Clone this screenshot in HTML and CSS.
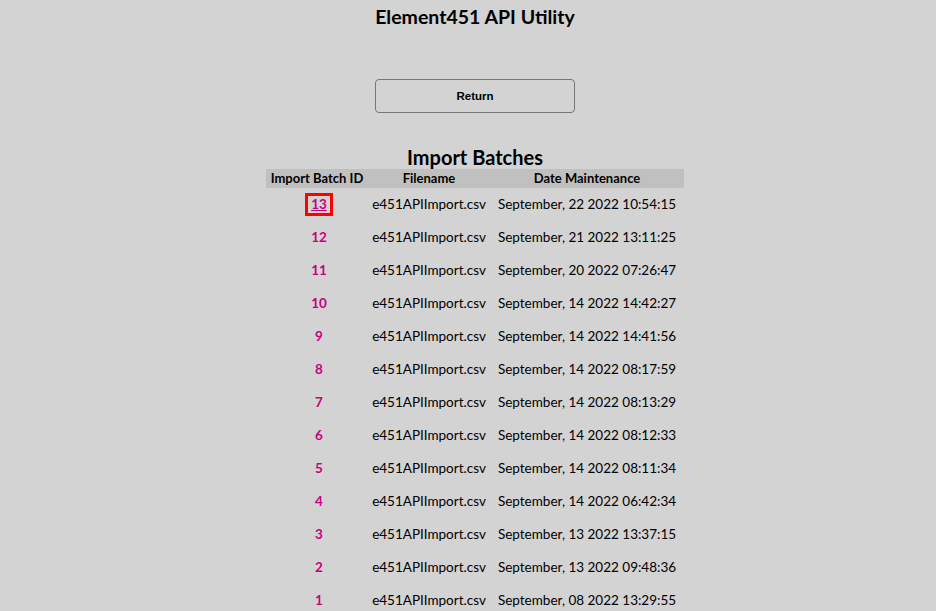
FILE: index.html
```html
<!DOCTYPE html>
<html>
<head>
<meta charset="utf-8">
<title>Element451 API Utility</title>
<link rel="stylesheet" href="styles.css">
</head>
<body>
<div class="page">
  <h1 class="title">Element451 API Utility</h1>
  <div class="actions">
    <button class="btn">Return</button>
  </div>
  <h2 class="caption">Import Batches</h2>
  <table class="batches">
    <thead>
      <tr><th class="c-id">Import Batch ID</th><th class="c-file">Filename</th><th class="c-date">Date Maintenance</th></tr>
    </thead>
    <tbody>
      <tr><td class="c-id"><a class="id-link focused" href="#">13</a></td><td>e451APIImport.csv</td><td>September, 22 2022 10:54:15</td></tr>
      <tr><td class="c-id"><a class="id-link" href="#">12</a></td><td>e451APIImport.csv</td><td>September, 21 2022 13:11:25</td></tr>
      <tr><td class="c-id"><a class="id-link" href="#">11</a></td><td>e451APIImport.csv</td><td>September, 20 2022 07:26:47</td></tr>
      <tr><td class="c-id"><a class="id-link" href="#">10</a></td><td>e451APIImport.csv</td><td>September, 14 2022 14:42:27</td></tr>
      <tr><td class="c-id"><a class="id-link" href="#">9</a></td><td>e451APIImport.csv</td><td>September, 14 2022 14:41:56</td></tr>
      <tr><td class="c-id"><a class="id-link" href="#">8</a></td><td>e451APIImport.csv</td><td>September, 14 2022 08:17:59</td></tr>
      <tr><td class="c-id"><a class="id-link" href="#">7</a></td><td>e451APIImport.csv</td><td>September, 14 2022 08:13:29</td></tr>
      <tr><td class="c-id"><a class="id-link" href="#">6</a></td><td>e451APIImport.csv</td><td>September, 14 2022 08:12:33</td></tr>
      <tr><td class="c-id"><a class="id-link" href="#">5</a></td><td>e451APIImport.csv</td><td>September, 14 2022 08:11:34</td></tr>
      <tr><td class="c-id"><a class="id-link" href="#">4</a></td><td>e451APIImport.csv</td><td>September, 14 2022 06:42:34</td></tr>
      <tr><td class="c-id"><a class="id-link" href="#">3</a></td><td>e451APIImport.csv</td><td>September, 13 2022 13:37:15</td></tr>
      <tr><td class="c-id"><a class="id-link" href="#">2</a></td><td>e451APIImport.csv</td><td>September, 13 2022 09:48:36</td></tr>
      <tr><td class="c-id"><a class="id-link" href="#">1</a></td><td>e451APIImport.csv</td><td>September, 08 2022 13:29:55</td></tr>
    </tbody>
  </table>
</div>
</body>
</html>
```
FILE: styles.css
```css
html, body {
  margin: 0;
  padding: 0;
  background: #d3d3d3;
}
body {
  font-family: Lato, "DejaVu Sans", sans-serif;
  color: #000;
  overflow: hidden;
}
.page {
  padding: 5px 0 0 14px;
  display: flex;
  flex-direction: column;
  align-items: center;
}
.title {
  margin: 0;
  font-size: 19.5px;
  line-height: 24px;
  font-weight: bold;
}
.actions {
  margin-top: 50px;
  line-height: 0;
}
.btn {
  width: 200px;
  height: 34px;
  border: 1px solid #767676;
  border-radius: 4px;
  background: #d3d3d3;
  font-family: "Liberation Sans", Arial, sans-serif;
  font-weight: bold;
  font-size: 11.5px;
  line-height: 14px;
  color: #000;
  padding: 0;
}
.caption {
  margin: 32px 0 0;
  font-size: 20px;
  line-height: 24px;
  font-weight: bold;
}
.batches {
  border-collapse: collapse;
  width: 418px;
  table-layout: fixed;
  font-size: 13.5px;
}
.batches thead tr {
  background: #c0c0c0;
}
.batches th {
  height: 19px;
  line-height: 19px;
  padding: 0;
  font-size: 13px;
  font-weight: bold;
  text-align: center;
  white-space: nowrap;
}
.c-id { width: 102px; }
.c-file { width: 122px; }
.c-date { width: 194px; }
.batches td {
  height: 33px;
  padding: 0;
  line-height: 17px;
  text-align: center;
  white-space: nowrap;
}
.batches td.c-id {
  padding-left: 4px;
}
.id-link {
  color: #c8007f;
  font-weight: bold;
  text-decoration: none;
}
.id-link.focused {
  display: inline-block;
  text-decoration: underline;
  line-height: 17px;
  padding: 0 3px;
  outline: 3px solid #ff0000;
}
```
